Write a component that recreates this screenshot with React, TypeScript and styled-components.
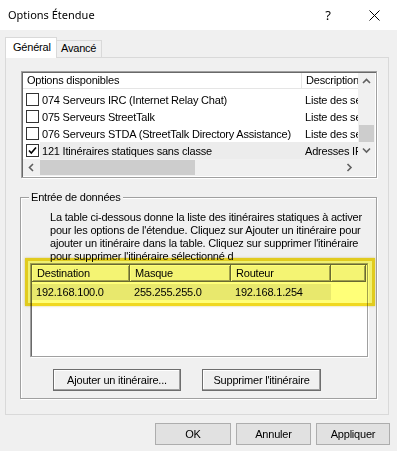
import React from 'react'
import styled, { createGlobalStyle } from 'styled-components'

const GlobalStyle = createGlobalStyle`
  html, body { margin: 0; padding: 0; background: #f0f0f0; }
  body { font: 11px 'Liberation Sans', Arial, sans-serif; letter-spacing: -0.2px; color: #000; }
  * { box-sizing: border-box; }
`

const options = [
  { label: '074 Serveurs IRC (Internet Relay Chat)', desc: 'Liste des serveurs IRC', checked: false },
  { label: '075 Serveurs StreetTalk', desc: 'Liste des serveurs StreetTalk', checked: false },
  { label: '076 Serveurs STDA (StreetTalk Directory Assistance)', desc: 'Liste des serveurs STDA', checked: false },
  { label: '121 Itinéraires statiques sans classe', desc: 'Adresses IP de destination', checked: true },
]

const routes = [
  { dest: '192.168.100.0', mask: '255.255.255.0', router: '192.168.1.254' },
]

const Chevron = ({ dir }: { dir: 'up' | 'down' | 'left' | 'right' }) => {
  const d = {
    up: 'M1 5 L4.5 1.5 L8 5',
    down: 'M1 1.5 L4.5 5 L8 1.5',
    left: 'M5 1 L1.5 4.5 L5 8',
    right: 'M1.5 1 L5 4.5 L1.5 8',
  }[dir]
  const vertical = dir === 'up' || dir === 'down'
  return <svg width={vertical ? 9 : 7} height={vertical ? 7 : 9} viewBox={vertical ? '0 0 9 7' : '0 0 7 9'}>
    <path d={d} fill='none' stroke='#606060' strokeWidth={1.6} />
  </svg>
}

const CheckBox = ({ checked }: { checked: boolean }) =>
  <Box>
    {checked && <svg width={11} height={11} viewBox='0 0 11 11'>
      <path d='M2 5.5 L4.3 8 L9 2.5' fill='none' stroke='#000' strokeWidth={1.6} />
    </svg>}
  </Box>

const App = () => {
  return <Window>
    <GlobalStyle/>
    <TitleBar>
      <Title>Options Étendue</Title>
      <CaptionBtn>?</CaptionBtn>
      <CaptionBtn>
        <svg width={11} height={11} viewBox='0 0 11 11'>
          <path d='M0.5 0.5 L10.5 10.5 M10.5 0.5 L0.5 10.5' stroke='#000' strokeWidth={1} />
        </svg>
      </CaptionBtn>
    </TitleBar>

    <Body>
      <TabStrip>
        <Tab active w={52}>Général</Tab>
        <Tab w={45}>Avancé</Tab>
      </TabStrip>
      <Panel>
        <ListView>
          <ListContent>
            <ListHeader>
              <HeadCell w={279}>Options disponibles</HeadCell>
              <HeadCell>Description</HeadCell>
            </ListHeader>
            {options.map((o, i) =>
              <OptionRow key={i}>
                <CheckCell><CheckBox checked={o.checked}/></CheckCell>
                <RowBody selected={i === 3}>
                  <Cell w={262}>{o.label}</Cell>
                  <Cell>{o.desc}</Cell>
                </RowBody>
              </OptionRow>
            )}
          </ListContent>
          <VScroll>
            <ArrowBtn><Chevron dir='up'/></ArrowBtn>
            <Track/>
            <Thumb/>
            <ArrowBtn><Chevron dir='down'/></ArrowBtn>
          </VScroll>
          <HScroll>
            <ArrowBtn><Chevron dir='left'/></ArrowBtn>
            <HThumb/>
            <Track/>
            <ArrowBtn><Chevron dir='right'/></ArrowBtn>
          </HScroll>
          <Corner/>
        </ListView>

        <GroupBox>
          <Legend>Entrée de données</Legend>
          <Description>
            {'La table ci-dessous donne la liste des itinéraires statiques à activer\n' +
              'pour les options de l\'étendue. Cliquez sur Ajouter un itinéraire pour\n' +
              'ajouter un itinéraire dans la table. Cliquez sur supprimer l\'itinéraire\n' +
              'pour supprimer l\'itinéraire sélectionné d'}
          </Description>
          <RoutesWrap>
            <RouteList>
              <RouteHeader>
                <RouteHead w={98}>Destination</RouteHead>
                <RouteHead w={101}>Masque</RouteHead>
                <RouteHead w={100}>Routeur</RouteHead>
                <RouteHead w={35}/>
              </RouteHeader>
              {routes.map((r, i) =>
                <RouteRow key={i}>
                  <RouteCell w={98}>{r.dest}</RouteCell>
                  <RouteCell w={101}>{r.mask}</RouteCell>
                  <RouteCell w={100}>{r.router}</RouteCell>
                </RouteRow>
              )}
            </RouteList>
            <Highlight/>
          </RoutesWrap>
          <GroupButtons>
            <ClassicButton w={128}>Ajouter un itinéraire...</ClassicButton>
            <ClassicButton w={119}>Supprimer l'itinéraire</ClassicButton>
          </GroupButtons>
        </GroupBox>
      </Panel>

      <Footer>
        <DialogButton w={76}>OK</DialogButton>
        <DialogButton w={75}>Annuler</DialogButton>
        <DialogButton w={74}>Appliquer</DialogButton>
      </Footer>
    </Body>
  </Window>
}
export default App


const Window = styled.div`
  width: 397px; height: 451px;
  background: #f0f0f0;
  overflow: hidden;
  display: flex; flex-direction: column;
`
const TitleBar = styled.div`
  height: 30px; flex-shrink: 0;
  background: #fff;
  display: flex; align-items: center;
  padding-left: 8px;
`
const Title = styled.div`
  flex: 1;
  font: 11px 'Noto Sans', 'Open Sans', sans-serif;
  letter-spacing: 0;
  margin-top: -1px;
`
const CaptionBtn = styled.div`
  width: 46px; height: 30px;
  display: flex; align-items: center; justify-content: center;
  font: 13px 'Noto Sans', sans-serif;
`
const Body = styled.div`
  flex: 1;
  padding: 6px 0 0 5px;
  display: flex; flex-direction: column;
`
const TabStrip = styled.div`
  display: flex; align-items: flex-end;
  height: 21px;
  position: relative; z-index: 1;
`
const Tab = styled.div<{ active?: boolean, w: number }>`
  width: ${p => p.w}px;
  height: ${p => p.active ? 21 : 17}px;
  padding-left: ${p => p.active ? 7 : 4}px;
  padding-top: ${p => p.active ? 3 : 1}px;
  background: ${p => p.active ? '#fff' : '#f0f0f0'};
  border: 1px solid #d9d9d9;
  border-bottom: none;
  ${p => !p.active && 'border-left: none;'}
  margin-bottom: ${p => p.active ? -1 : 0}px;
  font-size: 11px;
`
const Panel = styled.div`
  width: 384px; height: 358px;
  border: 1px solid #d9d9d9;
  background: #f0f0f0;
  padding: 13px 0 0 15px;
`
const ListView = styled.div`
  width: 356px; height: 107px;
  border: 1px solid #a0a0a0;
  box-shadow: inset 1px 1px #696969, 1px 1px #fff;
  background: #fff;
  padding: 1px 0 0 1px;
  display: grid;
  grid-template-columns: 335px 17px;
  grid-template-rows: 86px 17px;
`
const ListContent = styled.div`
  overflow: hidden;
  background: #fff;
`
const ListHeader = styled.div`
  height: 16px;
  display: flex;
  border-bottom: 1px solid #e5e5e5;
  margin-bottom: 2px;
  white-space: nowrap;
`
const HeadCell = styled.div<{ w?: number }>`
  ${p => p.w ? `width: ${p.w}px; border-right: 1px solid #e5e5e5;` : 'flex: 1;'}
  flex-shrink: 0;
  padding-left: 4px;
  line-height: 15px;
  overflow: hidden;
`
const OptionRow = styled.div`
  height: 17px;
  display: flex; align-items: center;
  white-space: nowrap;
`
const CheckCell = styled.div`
  width: 17px; flex-shrink: 0;
  padding-left: 3px;
  display: flex; align-items: center;
`
const Box = styled.div`
  width: 13px; height: 13px;
  border: 1px solid #333;
  background: #fff;
  display: flex; align-items: center; justify-content: center;
`
const RowBody = styled.div<{ selected?: boolean }>`
  flex: 1; height: 17px;
  display: flex; align-items: center;
  background: ${p => p.selected ? '#ececec' : 'transparent'};
  overflow: hidden;
`
const Cell = styled.div<{ w?: number }>`
  ${p => p.w ? `width: ${p.w}px;` : 'flex: 1;'}
  flex-shrink: 0;
  padding-left: ${p => p.w ? 2 : 3}px;
  overflow: hidden;
`
const VScroll = styled.div`
  background: #f0f0f0;
  display: flex; flex-direction: column;
`
const HScroll = styled.div`
  background: #f0f0f0;
  display: flex;
`
const Corner = styled.div`
  background: #f0f0f0;
`
const ArrowBtn = styled.div`
  width: 17px; height: 17px; flex-shrink: 0;
  display: flex; align-items: center; justify-content: center;
`
const Track = styled.div`
  flex: 1;
`
const Thumb = styled.div`
  height: 17px; margin: 0 1px;
  background: #cdcdcd;
`
const HThumb = styled.div`
  width: 155px; margin: 1px 0;
  background: #cdcdcd;
`
const GroupBox = styled.div`
  position: relative;
  width: 357px; height: 202px;
  margin: 19px 0 0 -1px;
  border: 1px solid #a0a0a0;
  box-shadow: inset 1px 1px #fff, 1px 1px #fff;
  padding: 13px 0 0 9px;
`
const Legend = styled.div`
  position: absolute; top: -7px; left: 8px;
  padding: 0 2px;
  background: #f0f0f0;
  line-height: 13px;
`
const Description = styled.div`
  margin-left: 20px;
  height: 52px;
  line-height: 13px;
  white-space: pre;
`
const RoutesWrap = styled.div`
  position: relative;
  width: 338px; height: 94px;
`
const RouteList = styled.div`
  width: 100%; height: 100%;
  border: 1px solid #a0a0a0;
  box-shadow: inset 1px 1px #696969, 1px 1px #fff;
  background: #fff;
  padding: 1px 0 0 1px;
  white-space: nowrap;
  overflow: hidden;
`
const RouteHeader = styled.div`
  height: 17px;
  display: flex;
`
const RouteHead = styled.div<{ w: number }>`
  width: ${p => p.w}px; flex-shrink: 0;
  background: #f4f4f4;
  box-shadow: inset -1px -1px #696969, inset 1px 1px #fff, inset -2px -2px #a0a0a0;
  padding-left: 5px;
  line-height: 16px;
`
const RouteRow = styled.div`
  height: 16px; margin-top: 2px;
  display: flex;
  width: 299px;
  background: #e8e8e8;
`
const RouteCell = styled.div<{ w: number }>`
  width: ${p => p.w}px; flex-shrink: 0;
  padding-left: 4px;
  line-height: 16px;
`
const Highlight = styled.div`
  position: absolute; left: -5px; top: -5px;
  width: 350px; height: 48px;
  border: 3px solid #f0d820;
  background: #ffff78;
  mix-blend-mode: multiply;
  box-shadow: 0 0 2px rgba(190, 160, 0, 0.5);
`
const GroupButtons = styled.div`
  display: flex; gap: 21px;
  margin: 12px 0 0 23px;
`
const ClassicButton = styled.div<{ w: number }>`
  width: ${p => p.w}px; height: 22px;
  border: 1px solid #6d6d6d;
  box-shadow: inset -1px -1px #a0a0a0, inset 1px 1px #fff;
  background: #f0f0f0;
  display: flex; align-items: center; justify-content: center;
`
const Footer = styled.div`
  display: flex; gap: 5px;
  justify-content: flex-end;
  padding-right: 7px;
  margin-top: 8px;
`
const DialogButton = styled.div<{ w: number }>`
  width: ${p => p.w}px; height: 22px;
  border: 1px solid #adadad;
  background: #e1e1e1;
  display: flex; align-items: center; justify-content: center;
`
